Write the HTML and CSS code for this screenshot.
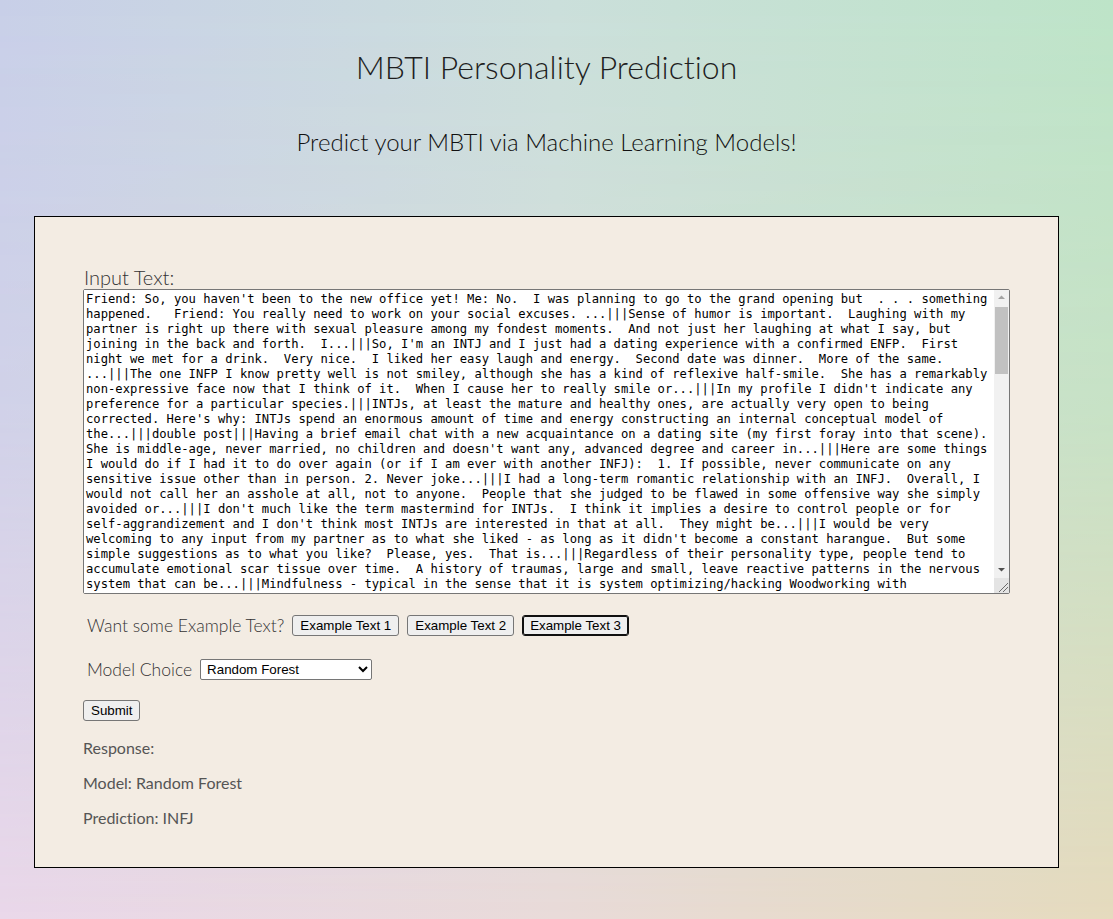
FILE: index.html
```html
<!DOCTYPE html>
<html lang="en">
<head>
<meta charset="utf-8">
<title>MBTI Personality Prediction</title>
<link rel="stylesheet" href="styles.css">
</head>
<body>
<div class="page">
  <h1 class="title">MBTI Personality Prediction</h1>
  <h2 class="subtitle">Predict your MBTI via Machine Learning Models!</h2>
  <div class="card">
    <label class="input-label" for="txt">Input Text:</label>
    <div class="ta-box">
      <textarea id="txt" class="input-text">Friend: So, you haven't been to the new office yet! Me: No.  I was planning to go to the grand opening but  . . . something happened.   Friend: You really need to work on your social excuses. ...|||Sense of humor is important.  Laughing with my partner is right up there with sexual pleasure among my fondest moments.  And not just her laughing at what I say, but joining in the back and forth.  I...|||So, I'm an INTJ and I just had a dating experience with a confirmed ENFP.  First night we met for a drink.  Very nice.  I liked her easy laugh and energy.  Second date was dinner.  More of the same. ...|||The one INFP I know pretty well is not smiley, although she has a kind of reflexive half-smile.  She has a remarkably non-expressive face now that I think of it.  When I cause her to really smile or...|||In my profile I didn't indicate any preference for a particular species.|||INTJs, at least the mature and healthy ones, are actually very open to being corrected. Here's why: INTJs spend an enormous amount of time and energy constructing an internal conceptual model of the...|||double post|||Having a brief email chat with a new acquaintance on a dating site (my first foray into that scene). She is middle-age, never married, no children and doesn't want any, advanced degree and career in...|||Here are some things I would do if I had it to do over again (or if I am ever with another INFJ):  1. If possible, never communicate on any sensitive issue other than in person. 2. Never joke...|||I had a long-term romantic relationship with an INFJ.  Overall, I would not call her an asshole at all, not to anyone.  People that she judged to be flawed in some offensive way she simply avoided or...|||I don't much like the term mastermind for INTJs.  I think it implies a desire to control people or for self-aggrandizement and I don't think most INTJs are interested in that at all.  They might be...|||I would be very welcoming to any input from my partner as to what she liked - as long as it didn't become a constant harangue.  But some simple suggestions as to what you like?  Please, yes.  That is...|||Regardless of their personality type, people tend to accumulate emotional scar tissue over time.  A history of traumas, large and small, leave reactive patterns in the nervous system that can be...|||Mindfulness - typical in the sense that it is system optimizing/hacking Woodworking with craftsmanship in mind.  Cooking.  Reading about history and science.  Long walks in the woods with no particular destination in mind...|||I think that the way you describe it is pretty accurate.  When I am deep in thought, I tend to lose track of what is happening around me, and people sometimes read that as being cold or aloof...|||That is a really interesting question.  I have always felt that the best conversations are the ones where both people are willing to follow an idea wherever it leads, even if it goes somewhere strange...|||My wife is an INFJ and I am an INTJ.  We have been together for a long time now and I can honestly say that the thing that makes it work is that we both value honesty and we both respect each other's need for quiet time...|||I have found that the older I get, the less I care about being right and the more I care about understanding why people believe what they believe.  That said, I still enjoy a good argument...|||Planning is one of my favorite activities.  I can spend hours working out the details of a trip that may never happen, and I enjoy every minute of it.  The actual trip is sometimes a letdown by comparison...|||I tend to agree with most of what has been said here.  The stereotypes are not completely wrong, but they leave out a lot of the nuance that makes each person unique...|||Music has always been a big part of my life.  I play guitar badly and piano even worse, but I love the process of learning something new and slowly getting better at it over time...|||There is a difference between being alone and being lonely.  I am almost never lonely when I am alone.  Crowds, on the other hand, can make me feel incredibly isolated...|||Honestly, I think the best advice I ever received was to stop trying to be who I thought other people wanted me to be.  It took me a long time to actually take that advice to heart...|||I read a lot of non-fiction, mostly history, philosophy and science.  Fiction is harder for me to get into unless the world building is really well done and the characters feel believable...|||When I was younger I thought that everyone thought the way I did.  It was a shock to discover how differently other people process information and make decisions...|||Work is fine.  I have a job that lets me solve interesting problems without too many meetings, which is about as good as it gets for someone like me...|||I usually need a day or two to recover after a big social event, even if I enjoyed it.  My partner understands this and gives me the space I need, which I appreciate more than I can say...|||Some of the most rewarding relationships in my life have been with people who are very different from me.  They challenge my assumptions and help me see things I would otherwise miss...|||Thanks for the thoughtful replies, everyone.  This has given me a lot to think about and I will probably come back to this thread again in the future...</textarea>
      <div class="scrollbar" aria-hidden="true">
        <div class="sb-btn">
          <svg width="15" height="15" viewBox="0 0 15 15"><path d="M4 9 L7.5 5.5 L11 9 Z" fill="#a3a3a3"/></svg>
        </div>
        <div class="sb-thumb"></div>
        <div class="sb-space"></div>
        <div class="sb-btn">
          <svg width="15" height="15" viewBox="0 0 15 15"><path d="M4 6 L11 6 L7.5 9.5 Z" fill="#505050"/></svg>
        </div>
        <div class="sb-corner">
          <svg width="15" height="15" viewBox="0 0 15 15"><path d="M14 5 L5 14 M14 9 L9 14" stroke="#6b6b6b" stroke-width="1" fill="none"/></svg>
        </div>
      </div>
    </div>
    <div class="row">
      <span class="row-label">Want some Example Text?</span>
      <button class="btn" type="button">Example Text 1</button>
      <button class="btn" type="button">Example Text 2</button>
      <button class="btn btn-focus" type="button">Example Text 3</button>
    </div>
    <div class="row row-model">
      <label class="row-label" for="model">Model Choice</label>
      <select id="model" class="select">
        <option>Random Forest</option>
        <option>Logistic Regression</option>
        <option>Naive Bayes</option>
      </select>
    </div>
    <div class="submit-row">
      <button class="btn btn-submit" type="submit">Submit</button>
    </div>
    <div class="response">
      <p>Response:</p>
      <p>Model: Random Forest</p>
      <p>Prediction: INFJ</p>
    </div>
  </div>
</div>
</body>
</html>
```

FILE: styles.css
```css
html, body {
  margin: 0;
  padding: 0;
  min-height: 100%;
}

body {
  position: relative;
  min-height: 919px;
  background: linear-gradient(to right, #ead8ea 0%, #e9dbd9 50%, #e6dbbe 100%);
  font-family: "Lato", "Liberation Sans", sans-serif;
  font-variant-ligatures: none;
  color: #222;
}

body::before {
  content: "";
  position: absolute;
  inset: 0;
  background: linear-gradient(to right, #c8cfe8 0%, #cbdfdb 50%, #bde4c8 100%);
  -webkit-mask-image: linear-gradient(to bottom, #000 0%, rgba(0,0,0,0.75) 45%, rgba(0,0,0,0) 100%);
  mask-image: linear-gradient(to bottom, #000 0%, rgba(0,0,0,0.75) 45%, rgba(0,0,0,0) 100%);
  z-index: 0;
}

.page {
  position: relative;
  z-index: 1;
  padding: 48px 54px 50px 34px;
}

.title {
  margin: 0 0 41px;
  text-align: center;
  font-size: 32px;
  font-weight: 300;
  line-height: 38px;
  color: #1e1e1e;
}

.subtitle {
  margin: 0 0 60px;
  text-align: center;
  font-size: 24px;
  font-weight: 300;
  line-height: 29px;
  color: #111;
}

.card {
  border: 1px solid #000;
  background: #f3ece3;
  padding: 48px 48px 24px 48px;
}

.input-label {
  display: block;
  font-size: 20px;
  font-weight: 300;
  line-height: 24px;
  color: #333;
  padding-left: 1px;
}

.ta-box {
  display: flex;
  box-sizing: border-box;
  width: 927px;
  height: 305px;
  border: 1px solid #767676;
  border-radius: 2px;
  background: #fff;
}

.input-text {
  flex: 1;
  min-width: 0;
  margin: 0;
  padding: 2px;
  border: none;
  outline: none;
  resize: none;
  overflow: hidden;
  background: #fff;
  font-family: "DejaVu Sans Mono", "Liberation Mono", monospace;
  font-size: 12.18px;
  line-height: 15px;
  color: #000;
}

.scrollbar {
  display: flex;
  flex-direction: column;
  width: 15px;
  flex: 0 0 15px;
  background: #f1f1f1;
}

.sb-btn {
  height: 15px;
  flex: 0 0 15px;
}

.sb-btn svg,
.sb-corner svg {
  display: block;
}

.sb-thumb {
  height: 67px;
  margin: 2px 1px 0;
  background: #c1c1c1;
}

.sb-space {
  flex: 1;
}

.sb-corner {
  height: 15px;
  flex: 0 0 15px;
  margin-top: 1px;
  background: #e4e4e4;
}

.row {
  display: flex;
  align-items: center;
  gap: 8px;
  padding-left: 4px;
  margin-top: 21px;
  height: 21px;
}

.row-model {
  margin-top: 23px;
}

.row-label {
  font-size: 17.5px;
  font-weight: 300;
  line-height: 21px;
  color: #333;
}

.btn {
  box-sizing: border-box;
  height: 21px;
  margin: 0;
  padding: 1px 7px;
  border: 1px solid #767676;
  border-radius: 3px;
  background: #efefef;
  font-family: "Liberation Sans", Arial, sans-serif;
  font-size: 13.33px;
  line-height: 17px;
  color: #000;
}

.btn-focus {
  border-color: #101010;
  outline: 1px solid #101010;
  outline-offset: -2px;
}

.select {
  box-sizing: border-box;
  width: 172px;
  height: 21px;
  margin: 0;
  padding: 0 2px;
  border: 1px solid #767676;
  border-radius: 2px;
  background: #fff;
  font-family: "Liberation Sans", Arial, sans-serif;
  font-size: 13.33px;
  color: #000;
}

.submit-row {
  display: flex;
  margin-top: 20px;
}

.btn-submit {
  padding: 1px 7px;
}

.response {
  padding-top: 1px;
}

.response p {
  margin: 16px 0;
  font-size: 16px;
  line-height: 19px;
  color: #555;
}
```
